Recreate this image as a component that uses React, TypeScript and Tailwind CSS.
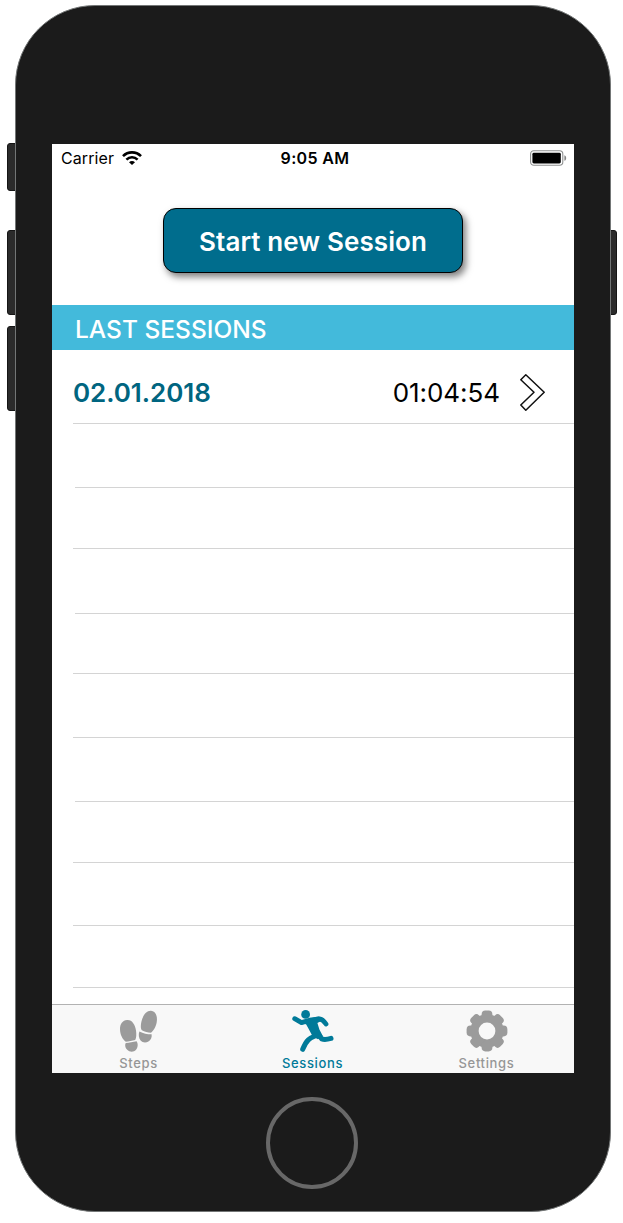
import React from "react";

const emptyRows = [
  "h-16 ml-[23px]",
  "h-[61px] ml-[21px]",
  "h-[65px] ml-[23px]",
  "h-[60px] ml-[21px]",
  "h-16 ml-[21px]",
  "h-16 ml-[23px]",
  "h-[61px] ml-[21px]",
  "h-[63px] ml-[21px]",
  "h-[62px] ml-[21px]",
];

function WifiIcon() {
  return (
    <svg className="ml-[8px] h-[14px] w-[20px]" viewBox="0 0 20 14" fill="none" stroke="#000" strokeWidth="2.6">
      <path d="M1 5.1C6 .1 14 .1 19 5.1" />
      <path d="M4.4 8.6C7.6 5.5 12.4 5.5 15.6 8.6" />
      <path d="M7 11.2C8.8 9.5 11.2 9.5 13 11.2L10 14Z" fill="#000" stroke="none" />
    </svg>
  );
}

function BatteryIcon() {
  return (
    <svg className="h-4 w-[37px]" viewBox="0 0 37 16">
      <rect x=".6" y=".7" width="32.2" height="14.6" rx="3.2" fill="#fff" stroke="#8e9090" strokeWidth="1.1" />
      <rect x="2.4" y="2.8" width="28.4" height="10.6" rx="1.4" fill="#000" />
      <path d="M34.4 5.2C36.8 6 36.8 10 34.4 10.8Z" fill="#858585" />
    </svg>
  );
}

function StatusBar() {
  return (
    <div className="grid h-[28px] grid-cols-3 items-center text-[16px] leading-none">
      <div className="flex items-center pl-[9px]">
        <span className="tracking-[0.1px]">Carrier</span>
        <WifiIcon />
      </div>
      <span className="pl-1 text-center font-semibold tracking-[0.35px] whitespace-nowrap">9:05 AM</span>
      <div className="flex justify-end pr-[7px]">
        <BatteryIcon />
      </div>
    </div>
  );
}

function ChevronIcon() {
  return (
    <svg className="ml-[20px] h-[38px] w-[26px]" viewBox="0 0 26 38" fill="none" stroke="#111" strokeWidth="1.5" strokeLinejoin="round">
      <path d="M5.8 .8 .8 5.8 14 18.3 .8 31 5.8 36.3 24.2 18.3Z" />
    </svg>
  );
}

function StepsIcon() {
  return (
    <svg className="h-[42px] w-[40px]" viewBox="0 0 40 42" fill="#9b9b9b">
      <path d="M8 10C12.8 9.4 16.2 14.4 17 20.6 17.4 24 17.6 28 16.2 30 13.4 30.6 9.6 31.4 6.8 31.8 3.6 29.4 1 24.6 1 19 1 14 3.6 10.4 8 10Z" />
      <path d="M6.8 33C10.2 32.8 14 31.8 17.6 31.3 19.4 34 18.9 37.6 16.8 40.1 14.7 42.3 10.4 42.2 8.2 39.8 6.2 37.8 5.6 34.8 6.8 33Z" />
      <path d="M31.8.8C36.4 1 38.3 5.6 37.9 10.6 37.6 15.8 34.9 20.5 32 22.8 28.9 22.5 25.4 21.6 22.9 20.3 21.4 18.4 21.7 14.9 22.4 11.8 23.7 5.5 27.4 .6 31.8 .8Z" />
      <path d="M20.4 21.4C24.2 23.4 28.3 24.2 32.6 24.2 33.2 27.1 31.8 30 29.4 31.5 26.8 33.1 23.5 32.7 21.6 30.5 19.8 28.2 19.2 24 20.4 21.4Z" />
    </svg>
  );
}

function RunnerIcon() {
  return (
    <svg className="h-[44px] w-[44px]" viewBox="0 0 44 44" fill="none" stroke="#007a99" strokeLinecap="round" strokeLinejoin="round">
      <circle cx="14.6" cy="4.4" r="4.4" fill="#007a99" stroke="none" />
      <path d="M3.7 8.7 10.5 12.6 18.5 10.2 28.5 8.9C31 9.2 33 11 35 14" strokeWidth="4.8" />
      <path d="M10.5 12.5C15 10 22 7.2 28 6.5L31 10.5 26.4 13 28.4 19.5 31.8 26 27 29.2 21.7 26.4 17.3 18.3 15.2 14.6Z" fill="#007a99" stroke="none" />
      <path d="M27.3 24.3 30.8 28.9C33.4 29.9 36.8 29.3 40 28.4" strokeWidth="5" />
      <path d="M25 25.5C18.5 28.2 15.5 29.8 11.7 39.3" strokeWidth="5" />
    </svg>
  );
}

function GearIcon() {
  return (
    <svg className="mr-px h-[42px] w-[42px]" viewBox="0 0 42 42">
      <g fill="#9b9b9b">
        <circle cx="21" cy="21" r="16.7" />
        <rect x="15.6" y=".6" width="10.8" height="40.8" rx="3.8" />
        <rect x=".6" y="15.6" width="40.8" height="10.8" rx="3.8" />
        <rect x="15.6" y=".6" width="10.8" height="40.8" rx="3.8" transform="rotate(45 21 21)" />
        <rect x="15.6" y=".6" width="10.8" height="40.8" rx="3.8" transform="rotate(-45 21 21)" />
      </g>
      <circle cx="21" cy="21" r="8.4" fill="#f8f8f8" />
    </svg>
  );
}

function Tab({ label, active = false, children }: { label: string; active?: boolean; children: React.ReactNode }) {
  return (
    <div className={`flex flex-1 flex-col items-center pt-[5px] ${active ? "text-[#007a99]" : "text-[#969696]"}`}>
      <div className="flex h-[44px] items-start">{children}</div>
      <span className="mt-px mr-px text-[13px] leading-[16px] font-medium tracking-[0.65px]">{label}</span>
    </div>
  );
}

export default function App() {
  return (
    <div className="flex h-[1223px] w-[623px] bg-white pt-[5px] pl-[15px] font-['Inter',sans-serif] text-black">
      <div className="relative h-[1207px] w-[596px]">
        <i className="absolute top-[138px] -left-2 h-12 w-3 rounded-[3px] border border-[#151515] bg-[#2b2b2b]" />
        <i className="absolute top-[225px] -left-2 h-[85px] w-3 rounded-[3px] border border-[#151515] bg-[#2b2b2b]" />
        <i className="absolute top-[321px] -left-2 h-[85px] w-3 rounded-[3px] border border-[#151515] bg-[#2b2b2b]" />
        <i className="absolute top-[225px] -right-[6px] h-[85px] w-3 rounded-[3px] border border-[#151515] bg-[#2b2b2b]" />
        <div className="relative flex h-full w-full flex-col items-center rounded-[80px] border border-[#737676] bg-[#1b1b1b] pt-[138px]">
          <main className="flex h-[929px] w-[522px] shrink-0 flex-col overflow-hidden bg-white">
            <StatusBar />
            <div className="flex h-[133px] justify-center pt-[36px]">
              <button className="h-[65px] w-[300px] rounded-[13px] border-[1.5px] border-black bg-[#006d8d] pt-[2px] text-[26px] leading-none font-semibold tracking-[0.1px] whitespace-nowrap text-white shadow-[3px_4px_7px_rgba(0,0,0,0.5)]">
                Start new Session
              </button>
            </div>
            <h2 className="flex h-[45px] items-center bg-[#43badb] pt-[4px] pl-[23px] text-[24.5px] leading-none font-medium text-white">LAST SESSIONS</h2>
            <div className="ml-[21px] flex h-[74px] items-center border-b border-[#d4d4d4] pt-[12px] pr-[28px] text-[26px] leading-none tracking-[-0.05px]">
              <span className="flex-1 font-semibold text-[#006580]">02.01.2018</span>
              <span>01:04:54</span>
              <ChevronIcon />
            </div>
            {emptyRows.map((row, i) => (
              <div key={i} className={`shrink-0 border-b border-[#d4d4d4] ${row}`} />
            ))}
            <nav className="mt-[16px] flex h-[69px] shrink-0 border-t border-[#b2b2b2] bg-[#f8f8f8]">
              <Tab label="Steps"><StepsIcon /></Tab>
              <Tab label="Sessions" active><RunnerIcon /></Tab>
              <Tab label="Settings"><GearIcon /></Tab>
            </nav>
          </main>
          <div className="mt-[24px] mr-[2px] size-[92px] shrink-0 rounded-full border-4 border-[#686868]" />
        </div>
      </div>
    </div>
  );
}
